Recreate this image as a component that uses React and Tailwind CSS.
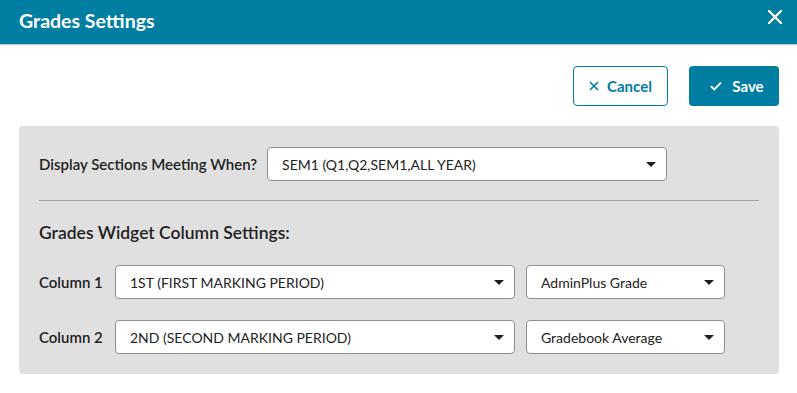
import React, { useState } from 'react'

const font = { fontFamily: "'Lato', 'Liberation Sans', sans-serif" }

function Caret() {
  return (
    <svg width="10" height="5" viewBox="0 0 10 5" className="shrink-0">
      <path d="M0 0 L10 0 L5 5 Z" fill="#1f1f1f" />
    </svg>
  )
}

function Select({ value, className }) {
  return (
    <div
      className={`h-[34px] flex items-center justify-between bg-white border border-[#8f8f8f] rounded-[4px] pl-[14px] pr-[10px] text-[14px] text-[#222] ${className}`}>
      <span>{value}</span>
      <Caret />
    </div>
  )
}

function ColumnRow({ label, period, source }) {
  return (
    <div className="flex items-center">
      <span className="w-[76px] shrink-0 text-[15px] font-semibold text-[#1f1f1f]">{label}</span>
      <Select value={period} className="w-[400px]" />
      <Select value={source} className="w-[199px] ml-[11px]" />
    </div>
  )
}

export default function App() {
  const [open] = useState(true)
  if (!open) return null

  return (
    <div style={font} className="w-[797px] h-[393px] bg-white overflow-hidden">
      <div className="h-[45px] bg-[#007ea1] border-b border-[#a9d1dd] flex items-start justify-between pl-[19px] pr-[15px]">
        <h1 className="mt-[9px] text-[19.5px] leading-[24px] font-bold text-white">Grades Settings</h1>
        <svg width="14" height="14" viewBox="0 0 14 14" className="mt-[10px]">
          <path d="M1 1 L13 13 M13 1 L1 13" stroke="white" strokeWidth="2.4" strokeLinecap="round" />
        </svg>
      </div>

      <div className="pl-[19px] pr-[18px]">
        <div className="flex justify-end gap-[21px] mt-[21px]">
          <button className="w-[95px] h-[40px] flex items-center justify-center gap-[8px] border border-[#007ea1] rounded-[4px] text-[#007ea1] text-[15px] font-bold bg-white">
            <svg width="10" height="10" viewBox="0 0 10 10">
              <path d="M1 1 L9 9 M9 1 L1 9" stroke="#007ea1" strokeWidth="1.6" />
            </svg>
            Cancel
          </button>
          <button className="w-[90px] h-[40px] flex items-center justify-center gap-[10px] pl-[6px] bg-[#007ea1] rounded-[4px] text-white text-[15px] font-bold">
            <svg width="12" height="10" viewBox="0 0 12 10">
              <path d="M1 5.2 L4.3 8.4 L11 1.6" stroke="white" strokeWidth="2" fill="none" />
            </svg>
            Save
          </button>
        </div>

        <div className="mt-[20px] bg-[#e0e0e0] rounded-[4px] pt-[21px] pb-[20px] px-[20px]">
          <div className="flex items-center">
            <span className="text-[15px] font-semibold text-[#1f1f1f] mr-[10px]">Display Sections Meeting When?</span>
            <Select value="SEM1 (Q1,Q2,SEM1,ALL YEAR)" className="w-[400px]" />
          </div>

          <div className="h-px bg-[#a3a3a3] mt-[19px]" />

          <h2 className="mt-[21px] text-[17.5px] font-semibold text-[#1f1f1f] leading-[22px]">
            Grades Widget Column Settings:
          </h2>

          <div className="mt-[21px] flex flex-col gap-[21px]">
            <ColumnRow label="Column 1" period="1ST (FIRST MARKING PERIOD)" source="AdminPlus Grade" />
            <ColumnRow label="Column 2" period="2ND (SECOND MARKING PERIOD)" source="Gradebook Average" />
          </div>
        </div>
      </div>
    </div>
  )
}
